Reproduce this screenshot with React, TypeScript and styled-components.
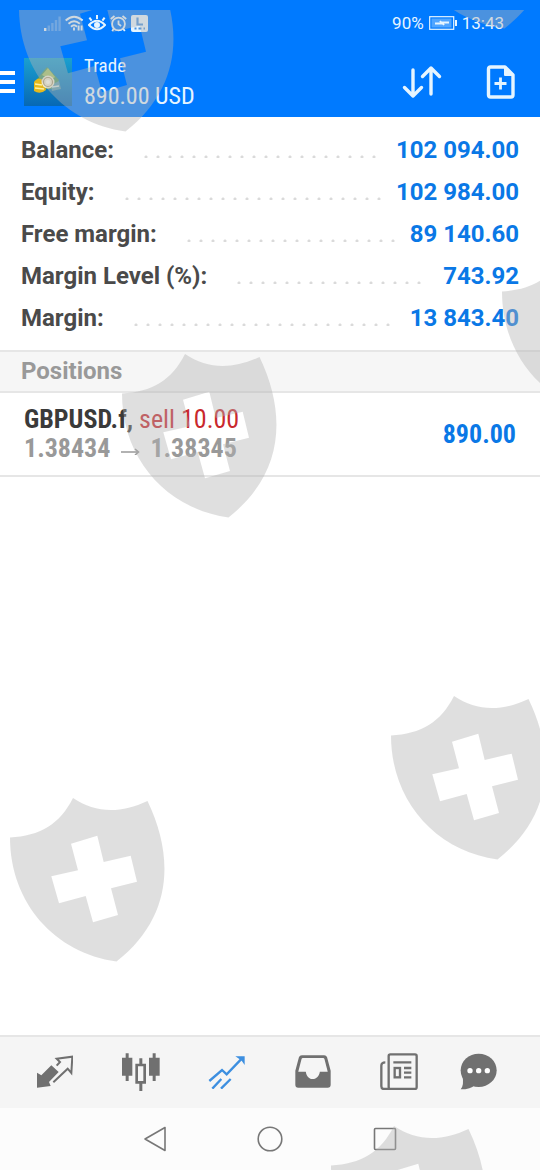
import React from "react";
import styled, { createGlobalStyle } from "styled-components";

const condensed = `"Roboto Condensed", "Liberation Sans Narrow", Roboto, sans-serif`;

const GlobalStyle = createGlobalStyle`
  *, *::before, *::after { box-sizing: border-box; }
  body { margin: 0; background: #fff; font-family: Roboto, sans-serif; }
  h1, h2, p, dl, dd, dt, ul { margin: 0; padding: 0; }
`;

const Page = styled.div`
  position: relative;
  display: flex;
  flex-direction: column;
  min-height: 100vh;
  overflow: hidden;
  background: #fff;
`;

const IconButton = styled.button`
  display: flex;
  align-items: center;
  justify-content: center;
  padding: 0;
  border: 0;
  background: none;
  color: inherit;
  cursor: pointer;
`;

const TopBar = styled.header`
  background: #007aff;
  color: #e6f5ff;
`;

const StatusBar = styled.div`
  display: flex;
  align-items: center;
  justify-content: space-between;
  height: 46px;
  padding: 0 36px 0 44px;
  font-size: 17px;
  line-height: 20px;
`;

const StatusGroup = styled.div<{ $gap: number }>`
  display: flex;
  align-items: center;
  gap: ${(p) => p.$gap}px;
`;

const TitleBar = styled.div`
  display: flex;
  align-items: center;
  height: 71px;
  padding-right: 24px;
`;

const AccountLogo = styled.svg`
  margin: 0 12px 0 9px;
`;

const TitleText = styled.div`
  flex: 1;
  font-family: ${condensed};
`;

const Title = styled.h1`
  font-size: 19px;
  line-height: 28px;
  font-weight: 400;
`;

const Subtitle = styled.p`
  font-size: 24px;
  line-height: 32px;
`;

const Actions = styled.div`
  display: flex;
  align-items: center;
  gap: 44px;
`;

const Content = styled.main`
  flex: 1;
`;

const Summary = styled.dl`
  padding: 12px 21px 11px;
`;

const SummaryRow = styled.div`
  display: flex;
  align-items: center;
  height: 42px;
  font-size: 24px;
  line-height: 28px;
  font-weight: 700;
`;

const Label = styled.dt`
  color: #4a4a4a;
`;

const Leader = styled.span`
  flex: 1;
  height: 3px;
  margin: 12px 14px 0 30px;
  background: radial-gradient(circle at 2px 2px, #dadada 1px, transparent 2px) 0 0 / 12px 3px repeat-x;
`;

const Value = styled.dd`
  color: #0a78e6;
`;

const SectionTitle = styled.h2`
  padding: 4px 21px 5px;
  border-top: 2px solid #e6e6e6;
  border-bottom: 2px solid #e6e6e6;
  background: #f6f6f6;
  color: #999;
  font-size: 24px;
  line-height: 30px;
  font-weight: 700;
`;

const PositionList = styled.ul`
  list-style: none;
`;

const PositionItem = styled.li`
  display: flex;
  align-items: center;
  justify-content: space-between;
  padding: 12px 24px;
  border-bottom: 2px solid #e6e6e6;
  font-family: ${condensed};
  font-size: 26px;
  line-height: 29px;
`;

const Symbol = styled.p`
  color: #3a3a3a;
  font-weight: 700;
`;

const Side = styled.span`
  color: #c9282d;
  font-weight: 400;
`;

const Prices = styled.p`
  display: flex;
  align-items: center;
  gap: 10px;
  color: #999;
  font-weight: 700;
`;

const Profit = styled.strong`
  color: #0a78e6;
  font-weight: 700;
`;

const TabBar = styled.nav`
  display: grid;
  grid-template-columns: repeat(5, 86fr) 72fr;
  height: 73px;
  padding: 0 26px 2px 12px;
  border-top: 2px solid #e6e6e6;
  background: #f5f5f5;
`;

const Tab = styled(IconButton)<{ $active?: boolean }>`
  color: ${(p) => (p.$active ? "#3d8fe0" : "#707070")};
`;

const SystemBar = styled.nav`
  display: grid;
  grid-template-columns: repeat(3, 1fr);
  height: 62px;
  padding: 0 18%;
  background: #fcfcfc;
  color: #777;
`;

const WatermarkLayer = styled.div`
  position: absolute;
  inset: 10px 0 0;
  overflow: hidden;
  pointer-events: none;
`;

const Shield = styled.svg<{ $x: number; $y: number }>`
  position: absolute;
  left: ${(p) => p.$x}px;
  top: ${(p) => p.$y - 10}px;
  width: 155px;
  height: 164px;
  fill: rgba(178, 178, 178, 0.42);
`;

const shields = [
  { x: 19, y: -32 },
  { x: 398, y: -135 },
  { x: 502, y: 252 },
  { x: 122, y: 354 },
  { x: 391, y: 696 },
  { x: 10, y: 798 },
  { x: 331, y: 1126 },
];

const summary = [
  { label: "Balance:", value: "102 094.00" },
  { label: "Equity:", value: "102 984.00" },
  { label: "Free margin:", value: "89 140.60" },
  { label: "Margin Level (%):", value: "743.92" },
  { label: "Margin:", value: "13 843.40" },
];

const StatusIcons = () => (
  <StatusGroup $gap={4}>
    <svg width="17" height="17" viewBox="0 0 17 17" fill="currentColor">
      <path d="M0 13h2.400v3H0z" />
      <path opacity=".3" d="M3.600 10.500H6V16H3.600zM7.200 8h2.400v8H7.200zM10.800 5h2.400v11h-2.400zM14.400 1.500h2.400V16h-2.400z" />
    </svg>
    <svg width="19" height="17" viewBox="0 0 19 17" fill="none" stroke="currentColor" strokeWidth="1.900">
      <path d="M.700 5.500Q9 -2.200 17.600 5.500M3.500 8.700Q9 3.600 14.800 8.700M6 11.700Q9 9 12 11.700" />
      <path d="M9 12.500v3M13.600 10.500v5M16.600 10.500v5" />
    </svg>
    <svg width="18" height="17" viewBox="0 0 18 17" fill="none" stroke="currentColor" strokeWidth="2">
      <path d="M1 10Q9 1.500 17 10Q9 18.500 1 10Z" />
      <path d="M9 4V0M3.600 5.600L1.400 2.600M14.400 5.600l2.200-3" />
      <circle cx="9" cy="10" r="2" fill="currentColor" />
    </svg>
    <svg width="17" height="17" viewBox="0 0 17 17" fill="none" stroke="currentColor" strokeWidth="1.800">
      <circle cx="8.500" cy="9" r="6.400" />
      <path d="M8.500 5.500V9l2.600 2M.800 4L4.500 1M16.200 4L12.500 1M3.800 13.800L2.200 16M13.200 13.800l1.600 2.200" />
    </svg>
    <svg width="17" height="17" viewBox="0 0 17 17">
      <rect width="17" height="17" rx="2" fill="currentColor" />
      <path d="M6.500 2.500v7H12" fill="none" stroke="#4b93de" strokeWidth="2.200" />
      <path d="M3.500 13.500h2M7.500 13.500h3M12.500 13.500h1.500" stroke="#4b93de" strokeWidth="2" />
    </svg>
  </StatusGroup>
);

const BatteryIcon = () => (
  <svg width="28" height="14" viewBox="0 0 28 14" fill="none" stroke="currentColor">
    <rect x=".700" y=".700" width="24" height="12.600" strokeWidth="1.200" />
    <rect x="2.500" y="2.500" width="20" height="9" fill="currentColor" fillOpacity=".35" stroke="none" />
    <path d="M6 7.500h7l-2-2.500M20 6.500h-7l2 2.500" strokeWidth="2" />
    <path d="M27 4v6" strokeWidth="2" />
  </svg>
);

const MenuIcon = () => (
  <svg width="15" height="22" viewBox="0 0 15 22" fill="#fff">
    <path d="M0 0h15v4H0zM0 9h15v4H0zM0 18h15v4H0z" />
  </svg>
);

const Logo = () => (
  <AccountLogo width="48" height="48" viewBox="0 0 48 48" role="img" aria-label="Account">
    <defs>
      <linearGradient id="sea" x1="0" y1="0" x2="0" y2="1">
        <stop offset="0" stopColor="#1ba0cf" />
        <stop offset="1" stopColor="#0768b4" />
      </linearGradient>
    </defs>
    <rect width="48" height="48" fill="url(#sea)" />
    <path d="M13 21L23 9l12 13-4 9H15z" fill="#4e9c68" />
    <path d="M18 17l6-7 7 9-4 3z" fill="#a8c76c" />
    <path d="M10 24q4-6 9-2l3 10q-6 5-12 1z" fill="#e5b91d" />
    <path d="M11 26l7 1M11 30l9 1" stroke="#fff0a0" strokeWidth="1.500" />
    <path d="M27 27l8-4 2 8-9 2z" fill="#5d9fb1" />
    <circle cx="24" cy="24" r="6.500" fill="#f0ead0" />
    <circle cx="24" cy="24" r="4.500" fill="none" stroke="#a99c76" strokeWidth="1.200" />
    <circle cx="24" cy="24" r="2" fill="#fffdf0" />
    <path d="M28 29l7-1" stroke="#cfe2df" strokeWidth="1.500" />
  </AccountLogo>
);

const SortIcon = () => (
  <svg width="40" height="34" viewBox="0 0 40 34" fill="none" stroke="currentColor" strokeWidth="3.400" strokeLinecap="round" strokeLinejoin="round">
    <path d="M11 5v26M2.500 22.500L11 31l8.500-8.500M29 29V3M20.500 11.500L29 3l8.500 8.500" />
  </svg>
);

const NewOrderIcon = () => (
  <svg width="30" height="34" viewBox="0 0 30 34" fill="none" stroke="currentColor" strokeLinejoin="round">
    <path d="M4.500 2H19l8 8v20q0 2-2 2H4.500q-2 0-2-2V4q0-2 2-2z" strokeWidth="3.400" />
    <path d="M19 2v8h8z" fill="currentColor" strokeWidth="2" />
    <path d="M14.500 12.500v12M8.500 18.500h12" strokeWidth="2.800" />
  </svg>
);

const QuotesIcon = () => (
  <svg width="36" height="33" viewBox="111 105 108 99">
    <path d="M111 158l13 8 30-30 22 20-29 30 5 12-41 5z" fill="currentColor" />
    <path d="M160 187l43-41 11 13 3-49-47 6 10 10-10 11" fill="none" stroke="currentColor" strokeWidth="6" />
  </svg>
);

const ChartsIcon = () => (
  <svg width="40" height="38" viewBox="363 98 120 114" fill="currentColor">
    <path d="M377 99h9v13h11v54h-11v16h-9v-16h-11v-54h11zM458 99h9v13h12v54h-12v16h-9v-16h-11v-54h11z" />
    <path fillRule="evenodd" d="M418 114h9v16h11v60h-11v22h-9v-22h-12v-60h12zM414 138v44h16v-44z" />
  </svg>
);

const TradeIcon = () => (
  <svg width="38" height="34" viewBox="624 102 114 102" fill="none" stroke="currentColor" strokeWidth="7">
    <path d="M628 180l38-33 14 13 48-50M637 203l27-29M663 203l29-29" />
    <path d="M706 106h28v26l-9-13-8-6z" fill="currentColor" stroke="none" />
  </svg>
);

const HistoryIcon = () => (
  <svg width="36" height="35" viewBox="75 102 110 105" fill="currentColor">
    <path
      fillRule="evenodd"
      d="M96 105h68q7 0 9 6l11 41v43q0 9-9 9H85q-9 0-9-9v-43l11-41q2-6 9-6zM99 113q-3 0-4 3l-10 39h23c4 30 38 30 43 0h24l-10-39q-1-3-4-3z"
    />
  </svg>
);

const NewsIcon = () => (
  <svg width="38" height="37" viewBox="334 98 114 111" fill="none" stroke="currentColor" strokeWidth="7">
    <rect x="360" y="102" width="84" height="104" rx="5" />
    <path d="M350 126q-12 0-12 10v62q0 8 8 8h18M374 126h54M406 143h22M406 157h22M406 171h22" />
    <rect x="378" y="143" width="16" height="28" />
  </svg>
);

const ChatIcon = () => (
  <svg width="37" height="37" viewBox="571 98 111 111">
    <path d="M578 165q6 30-5 42 30 0 44-14z" fill="currentColor" />
    <ellipse cx="627" cy="150" rx="54" ry="50" fill="currentColor" />
    <g fill="#fff">
      <circle cx="601" cy="151" r="8" />
      <circle cx="627" cy="151" r="8" />
      <circle cx="653" cy="151" r="8" />
    </g>
  </svg>
);

const tabs = [
  { name: "Quotes", Icon: QuotesIcon },
  { name: "Charts", Icon: ChartsIcon },
  { name: "Trade", Icon: TradeIcon, active: true },
  { name: "History", Icon: HistoryIcon },
  { name: "News", Icon: NewsIcon },
  { name: "Messages", Icon: ChatIcon },
];

const PriceArrow = () => (
  <svg width="20" height="12" viewBox="0 0 20 12" fill="none" stroke="currentColor" strokeWidth="1.600" aria-label="to">
    <path d="M1 9h17M15 6l3.500 3-3.500 3" />
  </svg>
);

export default function App() {
  return (
    <Page>
      <GlobalStyle />
      <TopBar>
        <StatusBar>
          <StatusIcons />
          <StatusGroup $gap={5}>
            <span>90%</span>
            <BatteryIcon />
            <span>13:43</span>
          </StatusGroup>
        </StatusBar>
        <TitleBar>
          <IconButton aria-label="Menu">
            <MenuIcon />
          </IconButton>
          <Logo />
          <TitleText>
            <Title>Trade</Title>
            <Subtitle>890.00 USD</Subtitle>
          </TitleText>
          <Actions>
            <IconButton aria-label="Sort">
              <SortIcon />
            </IconButton>
            <IconButton aria-label="New order">
              <NewOrderIcon />
            </IconButton>
          </Actions>
        </TitleBar>
      </TopBar>
      <Content>
        <Summary>
          {summary.map((row) => (
            <SummaryRow key={row.label}>
              <Label>{row.label}</Label>
              <Leader />
              <Value>{row.value}</Value>
            </SummaryRow>
          ))}
        </Summary>
        <SectionTitle>Positions</SectionTitle>
        <PositionList>
          <PositionItem>
            <div>
              <Symbol>
                GBPUSD.f, <Side>sell 10.00</Side>
              </Symbol>
              <Prices>
                <span>1.38434</span>
                <PriceArrow />
                <span>1.38345</span>
              </Prices>
            </div>
            <Profit>890.00</Profit>
          </PositionItem>
        </PositionList>
      </Content>
      <TabBar>
        {tabs.map(({ name, Icon, active }) => (
          <Tab key={name} aria-label={name} $active={active}>
            <Icon />
          </Tab>
        ))}
      </TabBar>
      <SystemBar>
        <IconButton aria-label="Back">
          <svg width="24" height="26" viewBox="0 0 24 26" fill="none" stroke="currentColor" strokeWidth="1.600" strokeLinejoin="round">
            <path d="M2 13L22 1.500v23z" />
          </svg>
        </IconButton>
        <IconButton aria-label="Home">
          <svg width="26" height="26" viewBox="0 0 26 26" fill="none" stroke="currentColor" strokeWidth="1.600">
            <circle cx="13" cy="13" r="11.800" />
          </svg>
        </IconButton>
        <IconButton aria-label="Recent apps">
          <svg width="24" height="24" viewBox="0 0 24 24" fill="none" stroke="currentColor" strokeWidth="1.600">
            <rect x="1.500" y="1.500" width="21" height="21" rx="1" />
          </svg>
        </IconButton>
      </SystemBar>
      <WatermarkLayer aria-hidden="true">
        {shields.map(({ x, y }) => (
          <Shield key={`${x},${y}`} $x={x} $y={y} viewBox="0 0 155 164">
            <path
              fillRule="evenodd"
              d="M0 39.500C30 38 50 26 63 0C85 15 110 16 137.500 3C165 60 162 120 106.500 163.500C45 155 0 105 0 39.500ZM61 45.700L68 72.300L41.300 78.300L49 105.300L75.700 98L83 124.300L108 117L101 90.300L127 83.700L120.700 57.700L93.700 64L87.300 37.700Z"
            />
          </Shield>
        ))}
      </WatermarkLayer>
    </Page>
  );
}
